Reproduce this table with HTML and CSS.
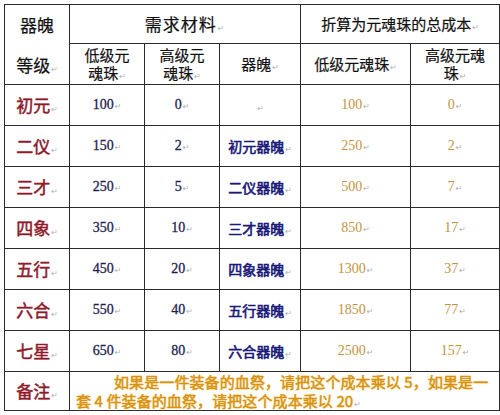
FILE: index.html
```html
<!DOCTYPE html>
<html lang="zh">
<head>
<meta charset="utf-8">
<link rel="stylesheet" href="styles.css">
</head>
<body>
<table class="grid">
  <colgroup>
    <col class="c1"><col class="c2"><col class="c3"><col class="c4"><col class="c5"><col class="c6">
  </colgroup>
  <thead>
    <tr class="h1">
      <th rowspan="2" class="corner">
        <div class="corner-box"><span>器魄</span><span>等级<i class="pm">↵</i></span></div>
      </th>
      <th colspan="3" class="big">需求材料<i class="pm">↵</i></th>
      <th colspan="2" class="mid">折算为元魂珠的总成本<i class="pm">↵</i></th>
    </tr>
    <tr class="h2">
      <th class="sub">低级元<br>魂珠<i class="pm">↵</i></th>
      <th class="sub">高级元<br>魂珠<i class="pm">↵</i></th>
      <th class="sub">器魄<i class="pm">↵</i></th>
      <th class="sub">低级元魂珠<i class="pm">↵</i></th>
      <th class="sub">高级元魂<br>珠<i class="pm">↵</i></th>
    </tr>
  </thead>
  <tbody>
    <tr><td class="lvl">初元<i class="pm">↵</i></td><td class="num">100<i class="pm">↵</i></td><td class="num">0<i class="pm">↵</i></td><td class="item"><i class="pm">↵</i></td><td class="cost">100<i class="pm">↵</i></td><td class="cost">0<i class="pm">↵</i></td></tr>
    <tr><td class="lvl">二仪<i class="pm">↵</i></td><td class="num">150<i class="pm">↵</i></td><td class="num">2<i class="pm">↵</i></td><td class="item">初元器魄<i class="pm">↵</i></td><td class="cost">250<i class="pm">↵</i></td><td class="cost">2<i class="pm">↵</i></td></tr>
    <tr><td class="lvl">三才<i class="pm">↵</i></td><td class="num">250<i class="pm">↵</i></td><td class="num">5<i class="pm">↵</i></td><td class="item">二仪器魄<i class="pm">↵</i></td><td class="cost">500<i class="pm">↵</i></td><td class="cost">7<i class="pm">↵</i></td></tr>
    <tr><td class="lvl">四象<i class="pm">↵</i></td><td class="num">350<i class="pm">↵</i></td><td class="num">10<i class="pm">↵</i></td><td class="item">三才器魄<i class="pm">↵</i></td><td class="cost">850<i class="pm">↵</i></td><td class="cost">17<i class="pm">↵</i></td></tr>
    <tr><td class="lvl">五行<i class="pm">↵</i></td><td class="num">450<i class="pm">↵</i></td><td class="num">20<i class="pm">↵</i></td><td class="item">四象器魄<i class="pm">↵</i></td><td class="cost">1300<i class="pm">↵</i></td><td class="cost">37<i class="pm">↵</i></td></tr>
    <tr><td class="lvl">六合<i class="pm">↵</i></td><td class="num">550<i class="pm">↵</i></td><td class="num">40<i class="pm">↵</i></td><td class="item">五行器魄<i class="pm">↵</i></td><td class="cost">1850<i class="pm">↵</i></td><td class="cost">77<i class="pm">↵</i></td></tr>
    <tr><td class="lvl">七星<i class="pm">↵</i></td><td class="num">650<i class="pm">↵</i></td><td class="num">80<i class="pm">↵</i></td><td class="item">六合器魄<i class="pm">↵</i></td><td class="cost">2500<i class="pm">↵</i></td><td class="cost">157<i class="pm">↵</i></td></tr>
    <tr class="foot">
      <td class="lvl">备注<i class="pm">↵</i></td>
      <td colspan="5" class="note-cell"><div class="note">如果是一件装备的血祭，请把这个成本乘以 5，如果是一套 4 件装备的血祭，请把这个成本乘以 20<i class="pm">↵</i></div></td>
    </tr>
  </tbody>
</table>
</body>
</html>
```

FILE: styles.css
```css
html, body {
  margin: 0;
  padding: 0;
  background: #fff;
}
body {
  padding: 4px 0 0 4px;
  font-family: "Liberation Serif", "Noto Sans CJK SC", serif;
}
.grid {
  border-collapse: collapse;
  table-layout: fixed;
  width: 495px;
}
.c1 { width: 65px; }
.c2 { width: 75px; }
.c3 { width: 75px; }
.c4 { width: 81px; }
.c5 { width: 110px; }
.c6 { width: 89px; }

.grid th, .grid td {
  border: 1px solid #2a2a2a;
  padding: 0;
  text-align: center;
  vertical-align: middle;
  font-weight: normal;
  line-height: 18px;
}
.h1 { height: 39px; }
.h2 { height: 41px; }
.grid tbody tr { height: 41px; }
.grid tbody tr.foot { height: 38px; }

.pm {
  font-style: normal;
  font-family: "DejaVu Sans", sans-serif;
  font-size: 8px;
  line-height: 8px;
  color: #b0b0b0;
  font-weight: normal;
  margin-left: 1px;
  -webkit-text-stroke: 0;
  text-shadow: none;
}

.corner {
  padding-top: 2px;
}
.corner-box {
  display: flex;
  flex-direction: column;
  align-items: center;
  gap: 20px;
  font-family: "Noto Sans CJK SC", sans-serif;
  font-size: 17px;
  line-height: 20px;
  color: #111;
  -webkit-text-stroke: 0.2px #111;
}
.big {
  font-family: "Noto Sans CJK SC", sans-serif;
  font-size: 17px;
  letter-spacing: 1px;
  color: #111;
  -webkit-text-stroke: 0.2px #111;
}
.mid {
  font-family: "Noto Sans CJK SC", sans-serif;
  font-size: 15px;
  color: #111;
  -webkit-text-stroke: 0.2px #111;
}
.sub {
  font-family: "Noto Sans CJK SC", sans-serif;
  font-size: 15px;
  color: #111;
  -webkit-text-stroke: 0.2px #111;
}
.lvl {
  font-family: "Noto Sans CJK SC", sans-serif;
  font-size: 17px;
  color: #8e1a2c;
  -webkit-text-stroke: 0.5px #8e1a2c;
}
.num {
  font-size: 14px;
  color: #1e1e50;
  -webkit-text-stroke: 0.3px #1e1e50;
}
.item {
  font-family: "Noto Sans CJK SC", sans-serif;
  font-size: 14px;
  color: #1a1a78;
  -webkit-text-stroke: 0.6px #1a1a78;
  text-align: right;
  padding-right: 2px;
}
.cost {
  font-size: 14px;
  color: #c2943e;
}
.grid td.note-cell {
  text-align: left;
  padding: 0 0 0 6px;
}
.note {
  font-family: "Noto Sans CJK SC", sans-serif;
  font-size: 15px;
  line-height: 19px;
  letter-spacing: 0.1px;
  color: #d8920e;
  -webkit-text-stroke: 0.5px #d8920e;
  text-align: left;
  text-indent: 38px;
  text-shadow: 0 0 3px #fbe7a8;
}
```
